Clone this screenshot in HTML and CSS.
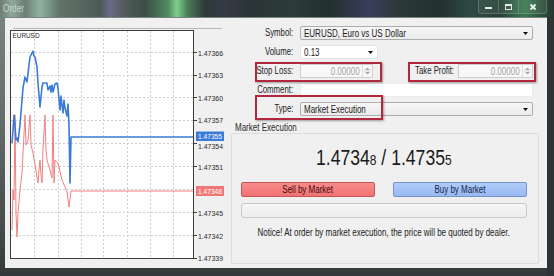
FILE: index.html
```html
<!DOCTYPE html>
<html>
<head>
<meta charset="utf-8">
<title>Order</title>
<link rel="stylesheet" href="styles.css">
</head>
<body>
<div class="win">
  <div class="titlebar">
    <span class="title">Order</span>
    <div class="controls">
      <span class="ctl"><svg width="9" height="8" viewBox="0 0 9 8"><rect x="1" y="4" width="7" height="2" fill="#e3e9e6"/></svg></span>
      <span class="ctl"><svg width="9" height="8" viewBox="0 0 9 8"><rect x="1.5" y="1.5" width="6" height="5" fill="none" stroke="#e3e9e6"/><rect x="1" y="1" width="7" height="2" fill="#e3e9e6"/></svg></span>
      <span class="ctl close"><svg width="8" height="8" viewBox="0 0 8 8"><path d="M1.5 1.5L6.5 6.5M6.5 1.5L1.5 6.5" stroke="#f4f6f5" stroke-width="1.8"/></svg></span>
    </div>
  </div>
  <div class="client">
    <div class="chart-pane">
      <svg class="chart" viewBox="5 18 225 250" width="225" height="250">
        <line x1="13" y1="28.5" x2="222" y2="28.5" stroke="#b8b8b8"/>
        <rect x="10.5" y="30.5" width="183" height="228" fill="#ffffff" stroke="#3c3c3c"/>
        <g stroke="#cdcdcd" stroke-dasharray="2 2" stroke-width="1">
          <line x1="34.5" y1="31" x2="34.5" y2="258"/>
          <line x1="58.5" y1="31" x2="58.5" y2="258"/>
          <line x1="81.5" y1="31" x2="81.5" y2="258"/>
          <line x1="103.5" y1="31" x2="103.5" y2="258"/>
          <line x1="127.5" y1="31" x2="127.5" y2="258"/>
          <line x1="150.5" y1="31" x2="150.5" y2="258"/>
          <line x1="173.5" y1="31" x2="173.5" y2="258"/>
          <line x1="11" y1="52.5" x2="193" y2="52.5"/>
          <line x1="11" y1="75.5" x2="193" y2="75.5"/>
          <line x1="11" y1="97.5" x2="193" y2="97.5"/>
          <line x1="11" y1="120.5" x2="193" y2="120.5"/>
          <line x1="11" y1="143.5" x2="193" y2="143.5"/>
          <line x1="11" y1="166.5" x2="193" y2="166.5"/>
          <line x1="11" y1="189.5" x2="193" y2="189.5"/>
          <line x1="11" y1="212.5" x2="193" y2="212.5"/>
          <line x1="11" y1="235.5" x2="193" y2="235.5"/>
        </g>
        <g stroke="#3c3c3c">
          <line x1="194" y1="52.5" x2="197" y2="52.5"/>
          <line x1="194" y1="75.5" x2="197" y2="75.5"/>
          <line x1="194" y1="97.5" x2="197" y2="97.5"/>
          <line x1="194" y1="120.5" x2="197" y2="120.5"/>
          <line x1="194" y1="143.5" x2="197" y2="143.5"/>
          <line x1="194" y1="166.5" x2="197" y2="166.5"/>
          <line x1="194" y1="212.5" x2="197" y2="212.5"/>
          <line x1="194" y1="235.5" x2="197" y2="235.5"/>
          <line x1="194" y1="258.5" x2="197" y2="258.5"/>
        </g>
        <g font-family="Liberation Sans, Arial, sans-serif" font-size="7.5" fill="#2a2a2a">
          <text x="198" y="55.5" textLength="25" lengthAdjust="spacingAndGlyphs">1.47366</text>
          <text x="198" y="78.3" textLength="25" lengthAdjust="spacingAndGlyphs">1.47363</text>
          <text x="198" y="100.5" textLength="25" lengthAdjust="spacingAndGlyphs">1.47360</text>
          <text x="198" y="123.3" textLength="25" lengthAdjust="spacingAndGlyphs">1.47357</text>
          <text x="198" y="148.5" textLength="25" lengthAdjust="spacingAndGlyphs">1.47354</text>
          <text x="198" y="169.5" textLength="25" lengthAdjust="spacingAndGlyphs">1.47351</text>
          <text x="198" y="215.5" textLength="25" lengthAdjust="spacingAndGlyphs">1.47345</text>
          <text x="198" y="238.5" textLength="25" lengthAdjust="spacingAndGlyphs">1.47342</text>
          <text x="198" y="260.5" textLength="25" lengthAdjust="spacingAndGlyphs">1.47339</text>
          <text x="12.5" y="38" textLength="27" lengthAdjust="spacingAndGlyphs" fill="#1e1e1e">EURUSD</text>
        </g>
        <polyline fill="none" stroke="#f08080" stroke-width="1" stroke-linejoin="round"
          points="12,230 13,190 14,200 15,115 16,213 17,237 18,213 20,190 22,173 23,153 25,115 26,145 28,140 30,115 31,145 33,153 35,165 38,183 39,170 40,160 41,175 42,183 43,150 45,115 46,150 47,160 50,170 52,178 53,115 54,183 55,160 58,163 62,180 65,187 67,192 69,207 71,191 193,191"/>
        <polyline fill="none" stroke="#3a7bd8" stroke-width="1.6" stroke-linejoin="round"
          points="12,143 13,130 14,115 15,125 16,140 17,138 18,142 20,125 22,100 23,88 25,77 27,82 29,65 30,57 32,53 33,51 34,56 35,57 37,67 38,83 40,107 42,87 43,83 47,83 48,90 50,86 51,92 52,85 53,92 55,84 57,83 58,88 60,110 61,96 62,105 63,113 64,100 65,108 67,116 68,104 69,125 70,183 71,137 193,137"/>
        <rect x="196" y="131.5" width="28" height="9.5" fill="#3a7bd8"/>
        <text x="198" y="139" font-family="Liberation Sans, Arial, sans-serif" font-size="7.5" fill="#ffffff" textLength="24" lengthAdjust="spacingAndGlyphs">1.47355</text>
        <rect x="196" y="186" width="28" height="10" fill="#f07878"/>
        <text x="198" y="194" font-family="Liberation Sans, Arial, sans-serif" font-size="7.5" fill="#ffffff" textLength="24" lengthAdjust="spacingAndGlyphs">1.47348</text>
      </svg>
    </div>

    <div class="form-pane">
      <div class="form">
        <label class="lbl"><span>Symbol:</span></label>
        <div class="select">
          <span class="txt">EURUSD, Euro vs US Dollar</span>
          <svg class="arrow" width="5" height="3" viewBox="0 0 5 3"><path d="M0 0H5L2.5 3Z" fill="#111"/></svg>
        </div>

        <label class="lbl"><span>Volume:</span></label>
        <div class="select volume">
          <span class="txt">0.13</span>
          <svg class="arrow" width="5" height="3" viewBox="0 0 5 3"><path d="M0 0H5L2.5 3Z" fill="#111"/></svg>
        </div>

        <label class="lbl"><span>Stop Loss:</span></label>
        <div class="sl-row">
          <div class="spin sl">
            <span class="val">0.00000</span>
            <span class="spin-btns"><svg width="7" height="10" viewBox="0 0 7 10"><path d="M1 4H6L3.5 1.5Z M1 6H6L3.5 8.5Z" fill="#a8a8a8"/><line x1="0" y1="5" x2="7" y2="5" stroke="#d8d8d8"/></svg></span>
          </div>
          <label class="lbl tp-lbl"><span>Take Profit:</span></label>
          <div class="spin tp">
            <span class="val">0.00000</span>
            <span class="spin-btns"><svg width="7" height="10" viewBox="0 0 7 10"><path d="M1 4H6L3.5 1.5Z M1 6H6L3.5 8.5Z" fill="#a8a8a8"/><line x1="0" y1="5" x2="7" y2="5" stroke="#d8d8d8"/></svg></span>
          </div>
        </div>

        <label class="lbl"><span>Comment:</span></label>
        <div class="input"></div>

        <label class="lbl"><span>Type:</span></label>
        <div class="select">
          <span class="txt">Market Execution</span>
          <svg class="arrow" width="5" height="3" viewBox="0 0 5 3"><path d="M0 0H5L2.5 3Z" fill="#111"/></svg>
        </div>
      </div>

      <div class="group-caption"><span>Market Execution</span></div>
      <div class="group">
        <div class="price"><span>1.4734<small>8</small> / 1.4735<small>5</small></span></div>
        <div class="buttons">
          <div class="btn sell"><span>Sell by Market</span></div>
          <div class="btn buy"><span>Buy by Market</span></div>
        </div>
        <div class="progress"></div>
        <p class="notice"><span>Notice! At order by market execution, the price will be quoted by dealer.</span></p>
      </div>

      <div class="mark mark-sl"></div>
      <div class="mark mark-tp"></div>
      <div class="mark mark-type"></div>
    </div>
  </div>
</div>
</body>
</html>
```

FILE: styles.css
```css
* { box-sizing: border-box; }
html, body { margin: 0; padding: 0; }
body {
  width: 554px;
  height: 276px;
  overflow: hidden;
  font-family: "Liberation Sans", Arial, sans-serif;
  background: #343a39;
}

.win {
  width: 554px;
  height: 276px;
  display: flex;
  flex-direction: column;
  background: linear-gradient(to bottom, #7c8682 0%, #636c69 45%, #3e4443 90%, #333938 100%);
  box-shadow: inset -7px 0 0 #2e3433;
}

/* ---------- title bar ---------- */
.titlebar {
  height: 17px;
  display: flex;
  justify-content: space-between;
  align-items: flex-start;
  padding-left: 3px;
  background: linear-gradient(90deg,
    #6f7d76 0px, #8fa89c 12px, #6c7f74 25px, #8fb3a0 40px, #5f7268 60px,
    #56655f 85px, #4a5a56 100px, #6a6a86 110px, #505a5a 125px, #3c4e48 145px,
    #4f8a62 168px, #7ecf8a 177px, #4a7a58 188px, #2e3a38 205px, #363a48 225px,
    #2a3434 250px, #2c3c3a 290px, #22302e 330px, #3a3e5a 370px, #2c3838 400px,
    #233030 440px, #2e4a44 470px, #264036 500px, #3a7a52 525px, #2a4a3a 545px,
    #2b3332 554px);
}
.title {
  display: inline-block;
  font-size: 10px;
  line-height: 17px;
  color: #cbd3cf;
  transform: scaleX(.82);
  transform-origin: left center;
}
.controls {
  display: flex;
  height: 14px;
  margin-right: 7px;
}
.ctl {
  width: 20px;
  height: 14px;
  display: flex;
  align-items: center;
  justify-content: center;
  background: rgba(255, 255, 255, .07);
  border: 1px solid rgba(255, 255, 255, .18);
  border-top: none;
  border-right: none;
}
.ctl:first-child { border-bottom-left-radius: 3px; }
.ctl.close {
  width: 29px;
  border-right: 1px solid rgba(255, 255, 255, .18);
  border-bottom-right-radius: 3px;
}

/* ---------- client ---------- */
.client {
  flex: 1;
  margin: 1px 7px 8px 5px;
  background: #f0f0f0;
  display: flex;
}
.chart-pane { width: 225px; flex: none; }
.chart { display: block; }

.form-pane {
  position: relative;
  flex: 1;
  padding-top: 8px;
}

.form {
  display: grid;
  width: 303px;
  grid-template-columns: 63px 233px;
  grid-auto-rows: 14px;
  column-gap: 7px;
  row-gap: 5px;
}
.lbl {
  display: block;
  font-size: 10px;
  line-height: 14px;
  color: #1c1c1c;
  text-align: right;
  white-space: nowrap;
}
.lbl span {
  display: inline-block;
  transform: scaleX(.78);
  transform-origin: right center;
}

.select {
  display: flex;
  align-items: center;
  justify-content: space-between;
  padding: 0 4px 0 3px;
  border: 1px solid #adadad;
  border-radius: 2px;
  background: linear-gradient(#f7f7f7, #ebebeb);
  font-size: 10px;
  color: #1a1a1a;
}
.select.volume {
  width: 78px;
  background: #ffffff;
  border-color: #e4e4e4;
}
.txt {
  display: inline-block;
  white-space: nowrap;
  transform: scaleX(.8);
  transform-origin: left center;
}
.arrow { display: block; flex: none; }

.sl-row { display: flex; }
.spin {
  display: flex;
  align-items: center;
  border: 1px solid #cdcdcd;
  background: #f8f8f8;
  font-size: 10px;
}
.spin.sl { width: 73px; }
.spin.tp { width: 75px; }
.val {
  display: inline-block;
  flex: 1;
  text-align: right;
  padding-right: 3px;
  color: #a3a3a3;
  white-space: nowrap;
  transform: scaleX(.8);
  transform-origin: right center;
}
.spin-btns {
  width: 10px;
  height: 12px;
  display: flex;
  align-items: center;
  justify-content: center;
  border-left: 1px solid #dedede;
}
.tp-lbl {
  flex: 1;
  padding-right: 4px;
}

.input {
  background: #ffffff;
  border: 1px solid #ececec;
}

/* ---------- market execution group ---------- */
.group-caption {
  margin-top: 7px;
  height: 10px;
  padding-left: 5px;
  font-size: 10px;
  line-height: 10px;
  color: #2a2a2a;
}
.group-caption span {
  display: inline-block;
  transform: scaleX(.8);
  transform-origin: left center;
}
.group {
  margin-left: 1px;
  width: 308px;
  height: 131px;
  border: 1px solid #dcdcdc;
  border-radius: 2px;
  padding: 11px 11px 0 9px;
}
.price {
  height: 26px;
  font-size: 22px;
  line-height: 26px;
  text-align: center;
  color: #1b1b1b;
  white-space: nowrap;
}
.price span {
  display: inline-block;
  transform: scaleX(.8);
  transform-origin: center center;
}
.price small { font-size: 15px; }

.buttons {
  display: flex;
  gap: 18px;
  margin-top: 11px;
}
.btn {
  width: 134px;
  height: 15px;
  border: 1px solid;
  border-radius: 2px;
  font-size: 10px;
  line-height: 13px;
  text-align: center;
  white-space: nowrap;
}
.btn span {
  display: inline-block;
  transform: scaleX(.8);
  transform-origin: center center;
}
.btn.sell {
  background: linear-gradient(#f88b8b, #f27272);
  border-color: #c45858;
  color: #3d0c0c;
}
.btn.buy {
  background: linear-gradient(#b0ccf9, #98b8f2);
  border-color: #7393c9;
  color: #13264c;
}
.progress {
  margin-top: 6px;
  height: 15px;
  border: 1px solid #c8c8c8;
  border-radius: 3px;
  background: linear-gradient(#f6f6f6, #ececec);
}
.notice {
  display: flex;
  justify-content: center;
  margin: 9px 0 0;
  font-size: 10px;
  line-height: 12px;
  color: #222222;
  white-space: nowrap;
}
.notice span {
  display: inline-block;
  flex: none;
  transform: scaleX(.8);
  transform-origin: center center;
}

/* ---------- red annotation frames (overlay) ---------- */
.mark {
  position: absolute;
  border: 2px solid #b1283c;
  box-shadow: 1px 1px 2px rgba(0, 0, 0, .35);
  pointer-events: none;
}
.mark-sl { left: 25px; top: 44px; width: 127px; height: 20px; }
.mark-tp { left: 178px; top: 44px; width: 128px; height: 20px; }
.mark-type { left: 25px; top: 77px; width: 128px; height: 25px; }
```
